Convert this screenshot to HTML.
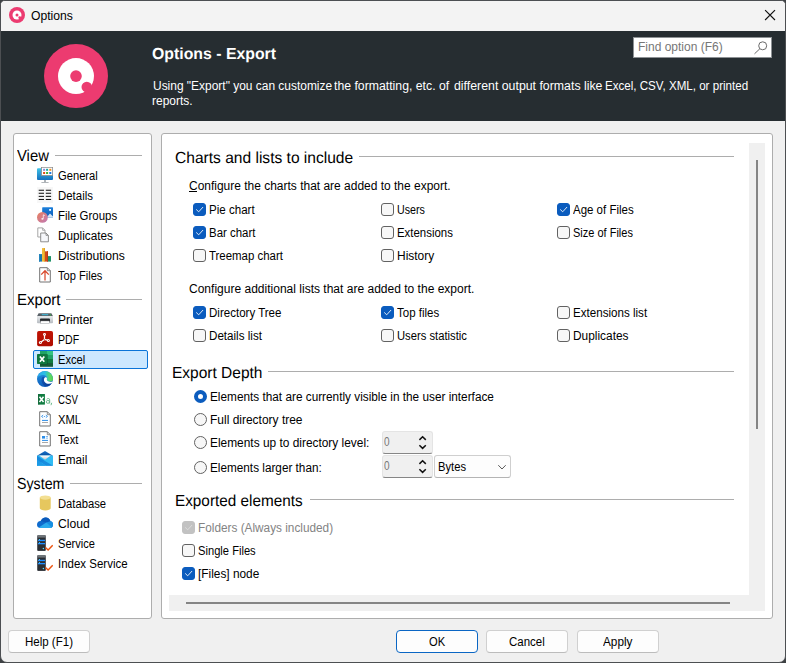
<!DOCTYPE html>
<html><head><meta charset="utf-8"><title>Options</title>
<style>
html,body{margin:0;padding:0}
body{width:786px;height:663px;position:relative;overflow:hidden;background:#3e4144;font-family:"Liberation Sans",sans-serif}
.abs,.t,.cb,.rb,.ic,.hl{position:absolute}
.t{line-height:0;white-space:nowrap;transform-origin:0 0}
.t u{text-decoration:underline;text-underline-offset:1px}
#win{left:0;top:0;width:784px;height:661px;border:1px solid #4c4f52;border-radius:5px 5px 7px 7px;background:#f0f0f0;overflow:hidden}
#titlebar{left:1px;top:1px;width:784px;height:30px;background:#f3f3f3;border-radius:4px 4px 0 0}
#hdr{left:1px;top:31px;width:784px;height:90px;background:#262d31}
#search{left:633px;top:37px;width:137px;height:19px;background:#fff;border:1px solid #8d9194}
.panel{background:#fff;border:1px solid #adadad;border-radius:3px;box-sizing:border-box}
#lp{left:13px;top:133px;width:139px;height:486px}
#rp{left:161px;top:133px;width:612px;height:486px}
.hl{height:1px;background:#adadad}
#sel{left:33px;top:350px;width:113px;height:17px;background:#cce8ff;border:1px solid #0a74d8;border-radius:2px}
.cb{width:11px;height:11px;border:1px solid #626262;border-radius:3px;background:#f7f7f7}
.cb.on{background:#0b5cbe;border-color:#0b5cbe}
.cb.dis{background:#c2c2c2;border-color:#c2c2c2}
.cb svg{position:absolute;left:0;top:0}
.rb{width:11px;height:11px;border:1px solid #626262;border-radius:50%;background:#f7f7f7}
.rb.on{background:#fff;border:4px solid #0b5cbe;width:5px;height:5px}
.btn{box-sizing:border-box;background:#fdfdfd;border:1px solid #d0d0d0;border-bottom-color:#bcbcbc;border-radius:4px}
.btn.def{border-color:#0a66c4;border-width:1px;}
.spin{box-sizing:border-box;background:#f0f0f0;border:1px solid #e4e4e4;border-bottom:1.5px solid #868686;border-radius:3px}
.combo{box-sizing:border-box;background:#fdfdfd;border:1px solid #cfcfcf;border-bottom-color:#b4b4b4;border-radius:3px}
.track{background:#f0f0f0}
.thumb{background:#858585}
.ic{width:16px;height:16px}

</style></head>
<body>
<div id="win" class="abs"></div>
<div id="titlebar" class="abs"></div>
<div id="hdr" class="abs"></div>
<!-- title icon -->
<svg class="abs" style="left:9px;top:7px" width="16" height="16" viewBox="0 0 64 64"><circle cx="32" cy="32" r="32" fill="#ec3b70"/><circle cx="32" cy="32" r="18" fill="#fff"/><circle cx="32" cy="32" r="6" fill="#ec3b70"/><circle cx="43" cy="43" r="5.6" fill="#ec3b70"/></svg>
<!-- close -->
<svg class="abs" style="left:764px;top:9px" width="12" height="12" viewBox="0 0 12 12"><path d="M1.1 1.1 L11 11 M11 1.1 L1.1 11" stroke="#111" stroke-width="1.15" fill="none"/></svg>
<!-- big logo -->
<svg class="abs" style="left:43px;top:43px" width="66" height="66" viewBox="0 0 66 66"><circle cx="33" cy="33.1" r="32" fill="#ec3b70"/><circle cx="33" cy="33.1" r="18" fill="#fff"/><circle cx="33" cy="33.1" r="5.8" fill="#ec3b70"/><circle cx="43.8" cy="44.1" r="5.3" fill="#ec3b70"/></svg>
<div id="search" class="abs"></div>
<svg class="abs" style="left:753px;top:40px" width="16" height="15" viewBox="0 0 16 15"><circle cx="9.7" cy="5.8" r="4" fill="none" stroke="#6a6a6a" stroke-width="1"/><path d="M6.8 8.8 L1.5 13.8" stroke="#6a6a6a" stroke-width="1"/></svg>

<div id="lp" class="abs panel"></div>
<div id="rp" class="abs panel"></div>
<!-- scroll tracks -->
<div class="abs track" style="left:749px;top:143px;width:16px;height:468px"></div>
<div class="abs track" style="left:169px;top:595px;width:596px;height:16px"></div>
<div class="abs thumb" style="left:756px;top:160px;width:2px;height:269px"></div>
<div class="abs thumb" style="left:186px;top:602px;width:544px;height:2px"></div>

<!-- nav lines -->
<div class="hl" style="left:55px;top:155px;width:87px"></div>
<div class="hl" style="left:66px;top:299px;width:76px"></div>
<div class="hl" style="left:70px;top:483px;width:72px"></div>
<div id="sel" class="abs"></div>
<!-- content lines -->
<div class="hl" style="left:359px;top:156px;width:375px"></div>
<div class="hl" style="left:268px;top:371px;width:466px"></div>
<div class="hl" style="left:310px;top:499px;width:424px"></div>

<div id="ul" class="abs" style="left:189px;top:191px;width:8px;height:1px;background:#000"></div>
<svg class="ic" style="left:37px;top:167px" width="16" height="16" viewBox="0 0 16 16"><defs><linearGradient id="gm" x1="0" y1="0" x2="0" y2="1"><stop offset="0" stop-color="#3fc4e8"/><stop offset="1" stop-color="#146fbe"/></linearGradient></defs><rect x="0" y="1.2" width="16" height="11.8" rx="1" fill="url(#gm)"/><rect x="7.2" y="13" width="1.6" height="2.2" fill="#9aa0a6"/><rect x="4.4" y="15" width="7.2" height="0.9" fill="#a9aeb3"/><rect x="4.5" y="0.3" width="11.2" height="8.2" fill="#fff" stroke="#8a8a8a" stroke-width="0.8"/><rect x="6.1" y="1.8" width="2" height="2" fill="#8c84d2"/><rect x="9.1" y="1.8" width="2" height="2" fill="#17a7a2"/><rect x="12.3" y="1.8" width="2" height="2" fill="#f28c1c"/><rect x="6.1" y="5" width="2" height="2" fill="#e24c12"/><rect x="9.1" y="5" width="2" height="2" fill="#3cb234"/><rect x="12.3" y="5" width="2" height="2" fill="#1b7ae2"/></svg>
<svg class="ic" style="left:37px;top:187px" width="16" height="16" viewBox="0 0 16 16"><rect x="0" y="0" width="16" height="16" fill="#f7f7f7"/><rect x="1.7" y="2.75" width="5.3" height="1" fill="#0a0a0a"/><rect x="8.8" y="2.75" width="5.3" height="1" fill="#0a0a0a"/><rect x="1.7" y="5.75" width="5.3" height="1" fill="#0a0a0a"/><rect x="8.8" y="5.75" width="5.3" height="1" fill="#0a0a0a"/><rect x="1.7" y="8.85" width="5.3" height="1" fill="#0a0a0a"/><rect x="8.8" y="8.85" width="5.3" height="1" fill="#0a0a0a"/><rect x="1.7" y="11.95" width="5.3" height="1" fill="#0a0a0a"/><rect x="8.8" y="11.95" width="5.3" height="1" fill="#0a0a0a"/></svg>
<svg class="ic" style="left:37px;top:207px" width="16" height="16" viewBox="0 0 16 16"><defs><linearGradient id="fg1" x1="0" y1="0" x2="1" y2="1"><stop offset="0" stop-color="#e8805c"/><stop offset="1" stop-color="#bf78b8"/></linearGradient><linearGradient id="fg2" x1="0" y1="0" x2="0" y2="1"><stop offset="0" stop-color="#1c80dc"/><stop offset="1" stop-color="#0b5cb6"/></linearGradient></defs><rect x="5.2" y="0.2" width="10.8" height="10.3" rx="0.6" fill="url(#fg2)"/><rect x="12.2" y="2" width="1.8" height="1.8" fill="#fff"/><path d="M9.5 10.5 L13 6.6 L16 9.6 V10.5 Z" fill="#d4e6f6"/><circle cx="5.4" cy="10.4" r="5.4" fill="url(#fg1)"/><path d="M6.3 7.8 V11.6 M6.3 7.8 L7.8 8.6" stroke="#fff" stroke-width="0.8" fill="none" opacity="0.9"/><ellipse cx="5.4" cy="11.8" rx="1.1" ry="0.9" fill="#fff" opacity="0.9"/></svg>
<svg class="ic" style="left:37px;top:227px" width="16" height="16" viewBox="0 0 16 16"><path d="M0.8 0.9 H5.6 L8 3.3 V10 H0.8 Z" fill="#fff" stroke="#9c9c9c" stroke-width="0.9" stroke-linejoin="miter"/><path d="M5.6 0.9 V3.3 H8" fill="none" stroke="#9c9c9c" stroke-width="0.8"/><path d="M3.7 6 H9 L11.4 8.4 V14.8 H3.7 Z" fill="#f6f7fa" stroke="#828282" stroke-width="0.9" stroke-linejoin="miter"/><path d="M9 6 V8.4 H11.4" fill="none" stroke="#828282" stroke-width="0.8"/></svg>
<svg class="ic" style="left:37px;top:247px" width="16" height="16" viewBox="0 0 16 16"><rect x="2" y="7.1" width="3" height="7.5" fill="#1a76ad"/><rect x="2" y="7.1" width="1" height="7.5" fill="#2585bd"/><rect x="5" y="1.1" width="3" height="13.5" fill="#f2bb3a"/><rect x="6.9" y="1.1" width="1.1" height="13.5" fill="#e0a526"/><rect x="8" y="4.3" width="3" height="10.3" fill="#d2481a"/><rect x="10" y="4.3" width="1" height="10.3" fill="#b93c14"/><rect x="11" y="9.1" width="3" height="5.5" fill="#1f9268"/></svg>
<svg class="ic" style="left:37px;top:267px" width="16" height="16" viewBox="0 0 16 16"><path d="M2.7 0.7 H10.3 L13.3 3.7 V15 H2.7 Z" fill="#fff" stroke="#737373" stroke-width="1" stroke-linejoin="miter"/><path d="M10.3 0.7 V3.7 H13.3" fill="none" stroke="#737373" stroke-width="0.8"/><path d="M8 13.4 V3.8 M4.2 7.6 L8 3.7 L11.8 7.6" fill="none" stroke="#d8482a" stroke-width="1.25"/></svg>
<svg class="ic" style="left:37px;top:311px" width="16" height="16" viewBox="0 0 16 16"><defs><linearGradient id="pr" x1="0" y1="0" x2="0" y2="1"><stop offset="0" stop-color="#e9ecee"/><stop offset="1" stop-color="#b5bac0"/></linearGradient></defs><path d="M1.6 2.3 H14.4 L16 5.3 H0 Z" fill="#596067"/><rect x="4.8" y="3.2" width="6.4" height="1" fill="#3ebfe2"/><circle cx="13.3" cy="3.9" r="0.55" fill="#37d23c"/><rect x="0" y="5.2" width="16" height="7" rx="0.9" fill="url(#pr)"/><rect x="3" y="7.4" width="10" height="3.8" rx="0.9" fill="#26292c"/><rect x="3.7" y="10" width="8.6" height="2.7" fill="#fff" stroke="#8e9297" stroke-width="0.4"/></svg>
<svg class="ic" style="left:37px;top:331px" width="16" height="16" viewBox="0 0 16 16"><defs><linearGradient id="pd" x1="0" y1="0" x2="0" y2="1"><stop offset="0" stop-color="#c01405"/><stop offset="1" stop-color="#b00d00"/></linearGradient></defs><rect x="0.1" y="0" width="15.9" height="15.2" rx="1.8" fill="url(#pd)"/><path d="M7.5 3.4 L7.5 8.4 L11.4 9.4 M7.5 8.4 L3.4 11.4" fill="none" stroke="#fff" stroke-width="1.25" stroke-linecap="round"/><circle cx="7.5" cy="3.4" r="1.45" fill="#fff"/><circle cx="11.4" cy="9.4" r="1.5" fill="#fff"/><circle cx="3.4" cy="11.4" r="1.5" fill="#fff"/><circle cx="7.5" cy="3.5" r="0.45" fill="#c01405"/><circle cx="11.4" cy="9.4" r="0.5" fill="#c01405"/><circle cx="3.4" cy="11.4" r="0.5" fill="#c01405"/><circle cx="7.5" cy="8.3" r="0.45" fill="#c01405"/></svg>
<svg class="ic" style="left:37px;top:351px" width="16" height="16" viewBox="0 0 16 16"><rect x="3" y="0" width="7" height="4.1" fill="#21a366"/><rect x="9.9" y="0" width="6.1" height="4.1" fill="#33c481"/><rect x="3" y="4" width="7" height="4.1" fill="#107c41"/><rect x="9.9" y="4" width="6.1" height="4.1" fill="#21a366"/><rect x="3" y="8" width="7" height="4.1" fill="#185c37"/><rect x="9.9" y="8" width="6.1" height="4.1" fill="#107c41"/><rect x="3" y="12" width="13" height="3.8" fill="#185c37"/><rect x="3" y="3.1" width="8" height="10.6" fill="#0a4a2a" opacity="0.45"/><rect x="0" y="3.1" width="10.1" height="9.8" rx="0.7" fill="#0f783e"/><path d="M2.9 5.5 L7.3 10.8 M7.3 5.5 L2.9 10.8" stroke="#fff" stroke-width="1.7" fill="none"/></svg>
<svg class="ic" style="left:37px;top:371px" width="16" height="16" viewBox="0 0 16 16"><defs><linearGradient id="e1" x1="0" y1="0" x2="0" y2="1"><stop offset="0" stop-color="#2196e0"/><stop offset="1" stop-color="#0e5cbc"/></linearGradient><linearGradient id="e2" x1="0" y1="0" x2="1" y2="0"><stop offset="0" stop-color="#2aa4ea"/><stop offset="0.5" stop-color="#2cbfe4"/><stop offset="0.66" stop-color="#40cc9c"/><stop offset="0.82" stop-color="#5fd865"/><stop offset="1" stop-color="#52cf58"/></linearGradient><linearGradient id="e3" x1="0" y1="0" x2="1" y2="1"><stop offset="0" stop-color="#1359b6"/><stop offset="1" stop-color="#0c3a92"/></linearGradient></defs><circle cx="8" cy="8" r="8" fill="url(#e1)"/><path d="M0.15 6.6 A8 8 0 0 1 15.95 8.9 C15.3 10.3 13.6 10.9 11.8 10.5 C10.2 10.1 9.6 9.2 9.9 8 C10.2 6.6 9.6 5 7.6 4.3 C5.2 3.6 2.4 4.6 0.15 6.6 Z" fill="url(#e2)"/><path d="M5.4 6 C3.8 8 4.2 12 7 14.4 C9.6 16.2 13.2 15 14.9 12 C12.8 13.2 9.6 13.1 8 11.3 C6.6 9.7 6.6 7.7 7.9 6.4 C7.2 5.6 6.1 5.5 5.4 6 Z" fill="url(#e3)"/><path d="M7.9 6.4 C6.6 7.7 6.6 9.7 8 11.3 C9.6 13.1 12.8 13.2 14.9 12 C15.2 11.5 15.4 11.1 15.6 10.6 C14.5 11.1 13 11 11.8 10.5 C10.2 10.1 9.6 9.2 9.9 8 C10 7.5 10 7.1 9.9 6.7 C9.3 6.1 8.5 6 7.9 6.4 Z" fill="#fff"/></svg>
<svg class="ic" style="left:37px;top:391px" width="16" height="16" viewBox="0 0 16 16"><rect x="1" y="3" width="6.9" height="10.6" fill="#107c41"/><rect x="1" y="3" width="1.6" height="10.6" fill="#185c37" opacity="0.5"/><path d="M2.5 5.7 L6.5 11 M6.5 5.7 L2.5 11" stroke="#fff" stroke-width="1.5" fill="none"/><ellipse cx="10.9" cy="10.9" rx="1.6" ry="1.45" fill="none" stroke="#62b684" stroke-width="0.9"/><path d="M9.7 8.3 C10.5 7.2 12.7 7.1 12.7 8.9 V12.6" fill="none" stroke="#62b684" stroke-width="0.9"/><path d="M14.7 11.8 L14 14.2" fill="none" stroke="#62b684" stroke-width="0.9"/></svg>
<svg class="ic" style="left:37px;top:411px" width="16" height="16" viewBox="0 0 16 16"><path d="M2.7 0.7 H10.3 L13.3 3.7 V15 H2.7 Z" fill="#fff" stroke="#737373" stroke-width="1" stroke-linejoin="miter"/><path d="M10.3 0.7 V3.7 H13.3" fill="none" stroke="#737373" stroke-width="0.8"/><path d="M6.2 4.1 L4.5 5.4 L6.2 6.7 M8.8 4.1 L10.5 5.4 L8.8 6.7" fill="none" stroke="#2b8de8" stroke-width="0.9"/><rect x="6.9" y="5" width="1.2" height="0.8" fill="#2b8de8"/><rect x="5" y="8.9" width="6" height="1" fill="#2b8de8"/><rect x="5" y="11" width="6" height="1" fill="#a9a9a9"/></svg>
<svg class="ic" style="left:37px;top:431px" width="16" height="16" viewBox="0 0 16 16"><path d="M2.7 0.7 H10.3 L13.3 3.7 V15 H2.7 Z" fill="#fff" stroke="#737373" stroke-width="1" stroke-linejoin="miter"/><path d="M10.3 0.7 V3.7 H13.3" fill="none" stroke="#737373" stroke-width="0.8"/><rect x="5" y="5" width="3" height="2.6" fill="#2b8de8"/><rect x="8.8" y="5.1" width="2.2" height="0.8" fill="#5aa8ee"/><rect x="8.8" y="6.7" width="2.2" height="0.8" fill="#5aa8ee"/><rect x="5" y="8.9" width="6" height="1" fill="#2b8de8"/><rect x="5" y="11" width="6" height="1" fill="#a9a9a9"/></svg>
<svg class="ic" style="left:37px;top:451px" width="16" height="16" viewBox="0 0 16 16"><defs><linearGradient id="em1" x1="0" y1="0" x2="0" y2="1"><stop offset="0" stop-color="#1672cc"/><stop offset="1" stop-color="#0a4f9e"/></linearGradient><linearGradient id="em2" x1="0" y1="0" x2="0" y2="1"><stop offset="0" stop-color="#ffffff"/><stop offset="1" stop-color="#c0c5ca"/></linearGradient></defs><path d="M0 4.8 L8 0 L16 4.8 Z" fill="url(#em1)"/><rect x="0" y="4.6" width="16" height="10.2" fill="#31bcf4"/><path d="M2.2 4.6 H13.8 L8 8.8 Z" fill="url(#em2)"/><path d="M0 4.6 L7.2 9.6 L0 14.8 Z" fill="#1c9ae6"/><path d="M0 5.2 L16 14.8 H9 L0 8.6 Z" fill="#1585da" opacity="0.85"/><path d="M0 14.8 L0 9 L9 14.8 Z" fill="#1c9ae6"/></svg>
<svg class="ic" style="left:37px;top:495px" width="16" height="16" viewBox="0 0 16 16"><path d="M2.8 2.6 V13.3 A5.45 2.1 0 0 0 13.7 13.3 V2.6 Z" fill="#e6c75e"/><ellipse cx="8.25" cy="2.6" rx="5.45" ry="2.1" fill="#f3df92"/></svg>
<svg class="ic" style="left:37px;top:515px" width="16" height="16" viewBox="0 0 16 16"><path d="M2.8 12.9 C1.2 12.9 0 11.5 0 9.8 C0 7.6 1.6 6 3.7 6.1 C4.5 4 6.4 2.5 8.7 2.5 C11 2.5 12.8 3.9 13.5 6.3 C15.1 6.6 16.1 7.9 16.1 9.6 C16.1 11.5 14.8 12.9 13.2 12.9 Z" fill="#0f6bcd"/><path d="M3.7 6.1 C4.5 4 6.4 2.5 8.7 2.5 C11 2.5 12.8 3.9 13.5 6.3 L9.3 7.6 L6.6 7 C5.7 6.3 4.7 6 3.7 6.1 Z" fill="#0a5abb"/><path d="M9.3 7.6 L13.5 6.3 C15.1 6.6 16.1 7.9 16.1 9.6 C16.1 11.5 14.8 12.9 13.2 12.9 L12 12.9 Z" fill="#1790e2"/><path d="M9.3 7.5 L15 12.5 C14.5 12.8 13.9 12.9 13.2 12.9 L2.8 12.9 C2.4 12.9 2 12.8 1.7 12.6 Z" fill="#2aa9ec"/></svg>
<svg class="ic" style="left:37px;top:535px" width="16" height="16" viewBox="0 0 16 16"><rect x="0.1" y="0.3" width="8.8" height="15.6" rx="0.8" fill="#4b4f56"/><rect x="0.9" y="2.4" width="7.2" height="13" fill="#2b2e33"/><path d="M1.2 0.1 H7.8 L8.9 1.2 V2.6 H0.1 V1.2 Z" fill="#6f7479"/><rect x="1" y="4.8" width="7" height="1.3" fill="#1d8cff"/><rect x="1" y="8" width="7" height="1.3" fill="#1d8cff"/><circle cx="2.5" cy="4.5" r="0.6" fill="#55d6ff"/><circle cx="2.5" cy="7.7" r="0.6" fill="#55d6ff"/><circle cx="6.4" cy="13.5" r="0.75" fill="#5fdcff"/><path d="M8.5 12.4 L11.1 14.9 L15.7 10.2" fill="none" stroke="#ec520e" stroke-width="1.4"/></svg>
<svg class="ic" style="left:37px;top:555px" width="16" height="16" viewBox="0 0 16 16"><rect x="0.1" y="0.3" width="8.8" height="15.6" rx="0.8" fill="#4b4f56"/><rect x="0.9" y="2.4" width="7.2" height="13" fill="#2b2e33"/><path d="M1.2 0.1 H7.8 L8.9 1.2 V2.6 H0.1 V1.2 Z" fill="#6f7479"/><rect x="1" y="4.8" width="7" height="1.3" fill="#1d8cff"/><rect x="1" y="8" width="7" height="1.3" fill="#1d8cff"/><circle cx="2.5" cy="4.5" r="0.6" fill="#55d6ff"/><circle cx="2.5" cy="7.7" r="0.6" fill="#55d6ff"/><circle cx="6.4" cy="13.5" r="0.75" fill="#5fdcff"/><path d="M8.5 12.4 L11.1 14.9 L15.7 10.2" fill="none" stroke="#ec520e" stroke-width="1.4"/></svg>
<div class="cb on" style="left:193px;top:203.0px"><svg width="11" height="11" viewBox="0 0 11 11"><path d="M2.5 5.7 L4.7 7.8 L8.8 3.3" stroke="#f4f8fd" stroke-width="0.9" fill="none" stroke-linecap="round" stroke-linejoin="round"/></svg></div>
<div class="cb on" style="left:193px;top:226.0px"><svg width="11" height="11" viewBox="0 0 11 11"><path d="M2.5 5.7 L4.7 7.8 L8.8 3.3" stroke="#f4f8fd" stroke-width="0.9" fill="none" stroke-linecap="round" stroke-linejoin="round"/></svg></div>
<div class="cb " style="left:193px;top:249.0px"></div>
<div class="cb " style="left:381px;top:203.0px"></div>
<div class="cb " style="left:381px;top:226.0px"></div>
<div class="cb " style="left:381px;top:249.0px"></div>
<div class="cb on" style="left:557px;top:203.0px"><svg width="11" height="11" viewBox="0 0 11 11"><path d="M2.5 5.7 L4.7 7.8 L8.8 3.3" stroke="#f4f8fd" stroke-width="0.9" fill="none" stroke-linecap="round" stroke-linejoin="round"/></svg></div>
<div class="cb " style="left:557px;top:226.0px"></div>
<div class="cb on" style="left:193px;top:306.0px"><svg width="11" height="11" viewBox="0 0 11 11"><path d="M2.5 5.7 L4.7 7.8 L8.8 3.3" stroke="#f4f8fd" stroke-width="0.9" fill="none" stroke-linecap="round" stroke-linejoin="round"/></svg></div>
<div class="cb " style="left:193px;top:329.0px"></div>
<div class="cb on" style="left:381px;top:306.0px"><svg width="11" height="11" viewBox="0 0 11 11"><path d="M2.5 5.7 L4.7 7.8 L8.8 3.3" stroke="#f4f8fd" stroke-width="0.9" fill="none" stroke-linecap="round" stroke-linejoin="round"/></svg></div>
<div class="cb " style="left:381px;top:329.0px"></div>
<div class="cb " style="left:557px;top:306.0px"></div>
<div class="cb " style="left:557px;top:329.0px"></div>
<div class="cb dis" style="left:182px;top:521.0px"><svg width="11" height="11" viewBox="0 0 11 11"><path d="M2.5 5.7 L4.7 7.8 L8.8 3.3" stroke="#dedede" stroke-width="0.9" fill="none" stroke-linecap="round" stroke-linejoin="round"/></svg></div>
<div class="cb " style="left:182px;top:544.0px"></div>
<div class="cb on" style="left:182px;top:567.0px"><svg width="11" height="11" viewBox="0 0 11 11"><path d="M2.5 5.7 L4.7 7.8 L8.8 3.3" stroke="#f4f8fd" stroke-width="0.9" fill="none" stroke-linecap="round" stroke-linejoin="round"/></svg></div>
<div class="rb on" style="left:194px;top:390.0px"></div>
<div class="rb " style="left:194px;top:413.0px"></div>
<div class="rb " style="left:194px;top:436.0px"></div>
<div class="rb " style="left:194px;top:461.0px"></div>

<div class="abs spin" style="left:381.5px;top:431px;width:51px;height:23px"></div>
<div class="abs spin" style="left:381.5px;top:455px;width:51px;height:23px"></div>
<div class="abs combo" style="left:434px;top:455px;width:77px;height:23px"></div>
<svg class="abs" style="left:416px;top:435px" width="12" height="16" viewBox="0 0 12 16"><path d="M3.4 4.9 L6.6 1.7 L9.8 4.9 M3.4 10.2 L6.6 13.4 L9.8 10.2" stroke="#111" stroke-width="1.5" fill="none"/></svg>
<svg class="abs" style="left:416px;top:459px" width="12" height="16" viewBox="0 0 12 16"><path d="M3.4 4.9 L6.6 1.7 L9.8 4.9 M3.4 10.2 L6.6 13.4 L9.8 10.2" stroke="#111" stroke-width="1.5" fill="none"/></svg>
<svg class="abs" style="left:496px;top:462px" width="12" height="10" viewBox="0 0 12 10"><path d="M2.3 3.2 L6 7 L9.7 3.2" stroke="#5a5a5a" stroke-width="1" fill="none"/></svg>

<div class="abs btn" style="left:8px;top:630px;width:82px;height:23px"></div>
<div class="abs btn def" style="left:396px;top:630px;width:82px;height:23px"></div>
<div class="abs btn" style="left:486px;top:630px;width:82px;height:23px"></div>
<div class="abs btn" style="left:576.5px;top:630px;width:82px;height:23px"></div>

<span class="t" style="left:30.9px;top:15.8px;font-size:12.5px;transform:scaleX(0.9727);color:#000;">Options</span>
<span class="t" style="left:152.0px;top:55.0px;font-size:16px;transform:scaleX(0.9897);color:#fff;font-weight:bold;text-rendering:geometricPrecision;">Options - Export</span>
<span class="t" style="left:152.8px;top:86.2px;font-size:12.5px;transform:scaleX(0.9558);color:#fff;">Using "Export" you can customize</span>
<span class="t" style="left:334.3px;top:86.2px;font-size:12.5px;transform:scaleX(0.9808);color:#fff;">the formatting, etc. of</span>
<span class="t" style="left:453.5px;top:86.2px;font-size:12.5px;transform:scaleX(0.9862);color:#fff;">different output formats like</span>
<span class="t" style="left:605.4px;top:86.2px;font-size:12.5px;transform:scaleX(0.9264);color:#fff;">Excel, CSV, XML, or printed</span>
<span class="t" style="left:152.0px;top:101.2px;font-size:12.5px;transform:scaleX(0.9575);color:#fff;">reports.</span>
<span class="t" style="left:638.0px;top:46.9px;font-size:12.5px;transform:scaleX(0.9603);color:#767676;">Find option (F6)</span>
<span class="t" style="left:17.1px;top:157.0px;font-size:16px;transform:scaleX(0.9255);color:#000;text-rendering:geometricPrecision;">View</span>
<span class="t" style="left:17.0px;top:301.0px;font-size:16px;transform:scaleX(0.9415);color:#000;text-rendering:geometricPrecision;">Export</span>
<span class="t" style="left:17.0px;top:485.0px;font-size:16px;transform:scaleX(0.8882);color:#000;text-rendering:geometricPrecision;">System</span>
<span class="t" style="left:58.0px;top:176.0px;font-size:12.5px;transform:scaleX(0.8949);color:#000;">General</span>
<span class="t" style="left:58.0px;top:196.0px;font-size:12.5px;transform:scaleX(0.9145);color:#000;">Details</span>
<span class="t" style="left:58.0px;top:216.0px;font-size:12.5px;transform:scaleX(0.9155);color:#000;">File Groups</span>
<span class="t" style="left:58.0px;top:236.0px;font-size:12.5px;transform:scaleX(0.9403);color:#000;">Duplicates</span>
<span class="t" style="left:58.0px;top:256.0px;font-size:12.5px;transform:scaleX(0.9732);color:#000;">Distributions</span>
<span class="t" style="left:58.0px;top:276.0px;font-size:12.5px;transform:scaleX(0.8864);color:#000;">Top Files</span>
<span class="t" style="left:58.0px;top:320.0px;font-size:12.5px;transform:scaleX(0.9608);color:#000;">Printer</span>
<span class="t" style="left:58.0px;top:340.0px;font-size:12.5px;transform:scaleX(0.8477);color:#000;">PDF</span>
<span class="t" style="left:58.0px;top:360.0px;font-size:12.5px;transform:scaleX(0.8915);color:#000;">Excel</span>
<span class="t" style="left:58.0px;top:380.0px;font-size:12.5px;transform:scaleX(0.9358);color:#000;">HTML</span>
<span class="t" style="left:58.0px;top:400.0px;font-size:12.5px;transform:scaleX(0.7716);color:#000;">CSV</span>
<span class="t" style="left:58.0px;top:420.0px;font-size:12.5px;transform:scaleX(0.8957);color:#000;">XML</span>
<span class="t" style="left:58.0px;top:440.0px;font-size:12.5px;transform:scaleX(0.8819);color:#000;">Text</span>
<span class="t" style="left:58.0px;top:460.0px;font-size:12.5px;transform:scaleX(0.9386);color:#000;">Email</span>
<span class="t" style="left:58.0px;top:504.0px;font-size:12.5px;transform:scaleX(0.8992);color:#000;">Database</span>
<span class="t" style="left:58.0px;top:524.0px;font-size:12.5px;transform:scaleX(0.9734);color:#000;">Cloud</span>
<span class="t" style="left:58.0px;top:544.0px;font-size:12.5px;transform:scaleX(0.8850);color:#000;">Service</span>
<span class="t" style="left:58.0px;top:564.0px;font-size:12.5px;transform:scaleX(0.9186);color:#000;">Index Service</span>
<span class="t" style="left:175.0px;top:159.0px;font-size:16px;transform:scaleX(0.9726);color:#000;text-rendering:geometricPrecision;">Charts and lists to include</span>
<span class="t" style="left:172.0px;top:374.0px;font-size:16px;transform:scaleX(0.9688);color:#000;text-rendering:geometricPrecision;">Export Depth</span>
<span class="t" style="left:175.0px;top:501.6px;font-size:16px;transform:scaleX(0.9565);color:#000;text-rendering:geometricPrecision;">Exported elements</span>
<span class="t" style="left:188.5px;top:186.1px;font-size:12.5px;transform:scaleX(0.9579);color:#000;">Configure the charts that are added to the export.</span>
<span class="t" style="left:188.5px;top:288.8px;font-size:12.5px;transform:scaleX(0.9619);color:#000;">Configure additional lists that are added to the export.</span>
<span class="t" style="left:209.0px;top:210.0px;font-size:12.5px;transform:scaleX(0.9248);color:#000;">Pie chart</span>
<span class="t" style="left:209.0px;top:233.0px;font-size:12.5px;transform:scaleX(0.9153);color:#000;">Bar chart</span>
<span class="t" style="left:209.0px;top:256.0px;font-size:12.5px;transform:scaleX(0.9148);color:#000;">Treemap chart</span>
<span class="t" style="left:397.0px;top:210.0px;font-size:12.5px;transform:scaleX(0.8547);color:#000;">Users</span>
<span class="t" style="left:397.0px;top:233.0px;font-size:12.5px;transform:scaleX(0.9132);color:#000;">Extensions</span>
<span class="t" style="left:397.0px;top:256.0px;font-size:12.5px;transform:scaleX(0.9562);color:#000;">History</span>
<span class="t" style="left:573.0px;top:210.0px;font-size:12.5px;transform:scaleX(0.9185);color:#000;">Age of Files</span>
<span class="t" style="left:573.0px;top:233.0px;font-size:12.5px;transform:scaleX(0.8796);color:#000;">Size of Files</span>
<span class="t" style="left:209.0px;top:313.0px;font-size:12.5px;transform:scaleX(0.9230);color:#000;">Directory Tree</span>
<span class="t" style="left:209.0px;top:336.0px;font-size:12.5px;transform:scaleX(0.9292);color:#000;">Details list</span>
<span class="t" style="left:397.0px;top:313.0px;font-size:12.5px;transform:scaleX(0.9196);color:#000;">Top files</span>
<span class="t" style="left:397.0px;top:336.0px;font-size:12.5px;transform:scaleX(0.8980);color:#000;">Users statistic</span>
<span class="t" style="left:573.0px;top:313.0px;font-size:12.5px;transform:scaleX(0.9278);color:#000;">Extensions list</span>
<span class="t" style="left:573.0px;top:336.0px;font-size:12.5px;transform:scaleX(0.9508);color:#000;">Duplicates</span>
<span class="t" style="left:210.0px;top:397.0px;font-size:12.5px;transform:scaleX(0.9437);color:#000;">Elements that are currently visible in the user interface</span>
<span class="t" style="left:210.0px;top:420.0px;font-size:12.5px;transform:scaleX(0.9581);color:#000;">Full directory tree</span>
<span class="t" style="left:210.0px;top:443.0px;font-size:12.5px;transform:scaleX(0.9517);color:#000;">Elements up to directory level:</span>
<span class="t" style="left:210.0px;top:467.5px;font-size:12.5px;transform:scaleX(0.9405);color:#000;">Elements larger than:</span>
<span class="t" style="left:383.8px;top:442.0px;font-size:12.5px;transform:scaleX(0.8031);color:#787878;">0</span>
<span class="t" style="left:383.8px;top:466.0px;font-size:12.5px;transform:scaleX(0.8031);color:#787878;">0</span>
<span class="t" style="left:437.8px;top:466.5px;font-size:12.5px;transform:scaleX(0.8963);color:#000;">Bytes</span>
<span class="t" style="left:198.0px;top:528.0px;font-size:12.5px;transform:scaleX(0.9440);color:#838383;">Folders (Always included)</span>
<span class="t" style="left:198.0px;top:551.0px;font-size:12.5px;transform:scaleX(0.8930);color:#000;">Single Files</span>
<span class="t" style="left:198.0px;top:574.0px;font-size:12.5px;transform:scaleX(0.9481);color:#000;">[Files] node</span>
<span class="t" style="left:24.7px;top:642.0px;font-size:12.5px;transform:scaleX(0.9206);color:#000;">Help (F1)</span>
<span class="t" style="left:429.2px;top:642.0px;font-size:12.5px;transform:scaleX(0.8944);color:#000;">OK</span>
<span class="t" style="left:509.3px;top:642.0px;font-size:12.5px;transform:scaleX(0.9185);color:#000;">Cancel</span>
<span class="t" style="left:602.6px;top:642.0px;font-size:12.5px;transform:scaleX(0.9413);color:#000;">Apply</span>
</body></html>
